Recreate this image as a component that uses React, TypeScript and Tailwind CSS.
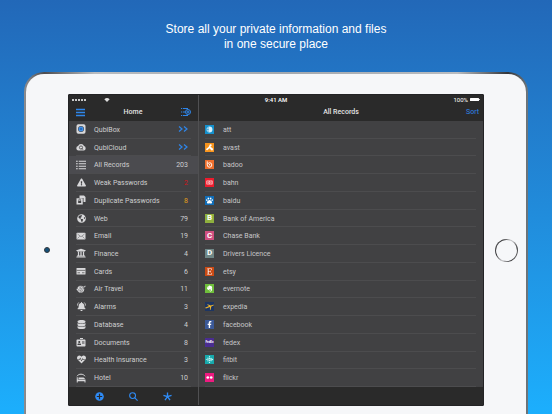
import type { ReactNode } from "react";
import {
  FaAddressCard,
  FaBell,
  FaDatabase,
  FaEtsy,
  FaEvernote,
  FaExclamationTriangle,
  FaFacebookF,
  FaGlobeAmericas,
  FaHeartbeat,
  FaPaw,
  FaUniversity,
} from "react-icons/fa";

type Category = { label: string; count: string; icon: ReactNode; tone?: string; active?: boolean };
type Entry = { label: string; tile: string; mark: ReactNode };

function Glyph({ children, size = "size-[10px]" }: { children: ReactNode; size?: string }) {
  return (
    <svg viewBox="0 0 20 20" className={size} fill="currentColor" aria-hidden="true">
      {children}
    </svg>
  );
}

function Chevrons() {
  return (
    <svg viewBox="0 0 20 12" className="h-[6px] w-[10px]" fill="none" stroke="#2f86ea" strokeWidth="2.400" aria-hidden="true">
      <path d="M2 1l6 5-6 5M12 1l6 5-6 5" />
    </svg>
  );
}

const categories: Category[] = [
  {
    label: "QubiBox",
    count: "",
    icon: (
      <Glyph>
        <rect x="1" y="0.500" width="18" height="19" rx="3.500" />
        <circle cx="10" cy="10" r="6" fill="#414143" />
        <circle cx="10" cy="10" r="5" fill="#3f8fe8" />
        <circle cx="10" cy="10" r="2" fill="#1f5fae" />
      </Glyph>
    ),
  },
  {
    label: "QubiCloud",
    count: "",
    icon: (
      <Glyph>
        <path d="M5 17a4.500 4.500 0 0 1-.8-8.900A6.200 6.200 0 0 1 16 8.200 4.500 4.500 0 0 1 15.500 17z" />
        <circle cx="10" cy="11" r="3.200" fill="none" stroke="#414143" strokeWidth="1.600" />
        <path d="M11 12l3 3.500" stroke="#414143" strokeWidth="1.600" />
      </Glyph>
    ),
  },
  {
    label: "All Records",
    count: "203",
    active: true,
    icon: (
      <Glyph>
        <path d="M0 1.500h3.500v2.200H0zM5.500 1.500H20v2.200H5.500zM0 6.500h3.500v2.200H0zM5.500 6.500H20v2.200H5.500zM0 11.500h3.500v2.200H0zM5.500 11.500H20v2.200H5.500zM0 16.500h3.500v2.200H0zM5.500 16.500H20v2.200H5.500z" />
      </Glyph>
    ),
  },
  { label: "Weak Passwords", count: "2", tone: "text-[#d0161c]", icon: <FaExclamationTriangle className="size-[9px]" /> },
  {
    label: "Duplicate Passwords",
    count: "8",
    tone: "text-[#e3a01b]",
    icon: (
      <Glyph>
        <path d="M7 1h9l3 3v10h-4V6H7z" />
        <path d="M1 6.500h12.500V19H1z" />
        <rect x="4.300" y="11.500" width="6" height="4.500" fill="#414143" />
        <path d="M5.500 11.500V10a1.800 1.800 0 0 1 3.600 0v1.500" fill="none" stroke="#414143" strokeWidth="1.300" />
      </Glyph>
    ),
  },
  { label: "Web", count: "79", icon: <FaGlobeAmericas className="size-[9px]" /> },
  {
    label: "Email",
    count: "19",
    icon: (
      <Glyph>
        <rect x="1" y="3.500" width="18" height="13.500" rx="1.500" />
        <path d="M3 6l7 5.500L17 6M3 15l4.500-4.500M17 15l-4.500-4.500" fill="none" stroke="#6a6a6c" strokeWidth="1.200" />
      </Glyph>
    ),
  },
  { label: "Finance", count: "4", icon: <FaUniversity className="size-[10px]" /> },
  {
    label: "Cards",
    count: "6",
    icon: (
      <Glyph>
        <rect x="1" y="4" width="18" height="13" rx="1" />
        <path d="M1 8.800h18" stroke="#5a5a5c" strokeWidth="1.600" />
        <path d="M3 13.500h5M12 13.500h5" stroke="#5a5a5c" strokeWidth="1.600" />
      </Glyph>
    ),
  },
  {
    label: "Air Travel",
    count: "11",
    icon: (
      <Glyph>
        <circle cx="9.500" cy="10.500" r="6.800" />
        <path d="M0 10l3-1 2 2 5-3-5-3 2-1.500 7 2.500 3-2c2-1 3.500 0 2 1.500L8 13.500l-5 .5z" stroke="#414143" strokeWidth="0.800" />
        <path d="M11 8.500L9 17l2.500-1L16 7z" stroke="#414143" strokeWidth="0.800" />
      </Glyph>
    ),
  },
  {
    label: "Alarms",
    count: "3",
    icon: (
      <span className="relative flex">
        <FaBell className="size-[9px]" />
        <svg viewBox="0 0 20 20" className="absolute inset-0 size-full" fill="none" stroke="currentColor" strokeWidth="1.800" aria-hidden="true">
          <path d="M4 1C2 2.500 1 5 1 8M16 1c2 1.500 3 4 3 7" />
        </svg>
      </span>
    ),
  },
  {
    label: "Database",
    count: "4",
    icon: <FaDatabase className="size-[9px]" />,
  },
  {
    label: "Documents",
    count: "8",
    icon: (
      <span className="flex flex-col items-center">
        <span className="h-px w-[3px] bg-current" />
        <FaAddressCard className="h-[8px] w-[10px]" />
      </span>
    ),
  },
  { label: "Health Insurance", count: "3", icon: <FaHeartbeat className="size-[9px]" /> },
  {
    label: "Hotel",
    count: "10",
    icon: (
      <Glyph>
        <path d="M2 6.500c3-5.500 13-5.500 16 0" fill="none" stroke="currentColor" strokeWidth="2" />
        <path d="M1.500 8.500h2V13H19v6h-2v-2.500H3.500V19h-2z" />
        <path d="M5 9h8c3 0 4.500 1.200 5 3H5z" />
      </Glyph>
    ),
  },
];

function Letter({ children }: { children: string }) {
  return <span className="text-[8px] leading-none font-bold">{children}</span>;
}

const entries: Entry[] = [
  {
    label: "att",
    tile: "bg-[#1590cc]",
    mark: (
      <Glyph size="size-[9px]">
        <circle cx="10" cy="10" r="6.500" fill="#d9effa" />
        <path d="M4 6.500h5M3.500 10h5M4 13.500h5" stroke="#1590cc" strokeWidth="1.600" />
      </Glyph>
    ),
  },
  {
    label: "avast",
    tile: "bg-[#f7941d]",
    mark: (
      <Glyph size="size-[9px]">
        <path d="M3 13l5-4 3-6 3-.5 1 3-3 3 5 3-.5 3-3 1-3.500-4-5 4.500-2.500-.5z" />
        <circle cx="15.500" cy="14.500" r="2.200" />
      </Glyph>
    ),
  },
  {
    label: "badoo",
    tile: "bg-[#ee6f2d]",
    mark: (
      <Glyph size="size-[9px]">
        <path d="M5 3v8a5 5 0 1 0 5-5c-2 0-3 1-3 2.500M10 9v3" fill="none" stroke="currentColor" strokeWidth="2" />
      </Glyph>
    ),
  },
  {
    label: "bahn",
    tile: "bg-[#ec1c2d]",
    mark: (
      <Glyph size="size-[9px]">
        <rect x="3" y="5.500" width="14" height="9" rx="1" fill="#fbc8cc" />
        <path d="M5.500 7.500v5H7c2.500 0 2.500-5 0-5zM11.800 7.500v5h1.500c1.800 0 1.800-2.500 0-2.500 1.600 0 1.600-2.500 0-2.500z" fill="none" stroke="#ec1c2d" strokeWidth="1.200" />
      </Glyph>
    ),
  },
  { label: "baidu", tile: "bg-[#0f6db8]", mark: <FaPaw className="size-[7px]" /> },
  { label: "Bank of America", tile: "bg-[#8fb03e]", mark: <Letter>B</Letter> },
  { label: "Chase Bank", tile: "bg-[#cf4f80]", mark: <Letter>C</Letter> },
  { label: "Drivers Licence", tile: "bg-[#6f8787]", mark: <Letter>D</Letter> },
  { label: "etsy", tile: "bg-[#cb4a14]", mark: <FaEtsy className="size-[7px]" /> },
  { label: "evernote", tile: "bg-[#6fbe3b]", mark: <FaEvernote className="size-[7px]" /> },
  {
    label: "expedia",
    tile: "bg-[#1d3562]",
    mark: (
      <Glyph size="size-[9px]">
        <path d="M0 13l9-4-4-3 1-1 7 2.500L18 6c2-.5 2.500 1 .5 2l-4.500 2-1.500 7-1.500.5L11 11l-9 3.500z" fill="#efb52b" />
      </Glyph>
    ),
  },
  { label: "facebook", tile: "bg-[#3b5998]", mark: <FaFacebookF className="size-[7px]" /> },
  { label: "fedex", tile: "bg-[#4a2d91]", mark: <span className="text-[3px] leading-none font-bold">FedEx</span> },
  {
    label: "fitbit",
    tile: "bg-[#17a9ac]",
    mark: (
      <Glyph size="size-[9px]">
        <g fill="#c9f4f3">
          <circle cx="10" cy="3.500" r="1.500" />
          <circle cx="10" cy="7.500" r="1.800" />
          <circle cx="10" cy="12" r="1.800" />
          <circle cx="10" cy="16.500" r="1.500" />
          <circle cx="6.500" cy="7" r="1.400" />
          <circle cx="6.500" cy="10" r="1.500" />
          <circle cx="6.500" cy="13" r="1.400" />
          <circle cx="3" cy="10" r="1.200" />
          <circle cx="13.500" cy="7.500" r="1.500" />
          <circle cx="13.500" cy="10" r="1.700" />
          <circle cx="13.500" cy="12.500" r="1.500" />
          <circle cx="16.500" cy="10" r="1.700" />
        </g>
      </Glyph>
    ),
  },
  {
    label: "flickr",
    tile: "bg-[#ee1a80]",
    mark: (
      <Glyph size="size-[9px]">
        <circle cx="6.200" cy="10" r="3" />
        <circle cx="13.800" cy="10" r="3" />
      </Glyph>
    ),
  },
];

function StatusBar() {
  return (
    <div className="z-10 col-span-full row-start-1 grid h-[9px] grid-cols-3 items-center self-start px-[3px] text-[6px] leading-none text-white">
      <div className="flex items-center gap-[18px]">
        <svg viewBox="0 0 28 4" className="h-[2px] w-[14px]" fill="#ffffff" role="img" aria-label="Signal strength">
          <circle cx="2" cy="2" r="2" />
          <circle cx="8" cy="2" r="2" />
          <circle cx="14" cy="2" r="2" />
          <circle cx="20" cy="2" r="2" />
          <circle cx="26" cy="2" r="2" />
        </svg>
        <svg viewBox="0 0 12 9" className="h-[4px] w-[6px]" fill="#ffffff" role="img" aria-label="Wi-Fi">
          <path d="M0 3a8.500 8.500 0 0 1 12 0L6 9z" opacity="0.850" />
        </svg>
      </div>
      <span className="text-center font-medium">9:41 AM</span>
      <div className="flex items-center justify-end gap-[2px]">
        <span>100%</span>
        <svg viewBox="0 0 20 6" className="h-[3px] w-[10px]" fill="#ffffff" role="img" aria-label="Battery full">
          <rect width="18" height="6" rx="1" />
          <rect x="18.500" y="2" width="1.500" height="2" />
        </svg>
      </div>
    </div>
  );
}

function Sidebar() {
  return (
    <nav aria-label="Home" className="col-start-1 row-start-1 border-r border-[#505052] pt-2">
      <header className="flex h-[18px] items-center justify-between px-[7px]">
        <button type="button" aria-label="Menu" className="text-[#2f86ea]">
          <svg viewBox="0 0 18 18" className="size-[9px]" stroke="currentColor" strokeWidth="3" aria-hidden="true">
            <path d="M0 3h18M0 9h18M0 15h18" />
          </svg>
        </button>
        <h2 className="font-medium text-[#e4e4e4]">Home</h2>
        <button type="button" aria-label="Add category" className="text-[#2f86ea]">
          <svg viewBox="0 0 20 20" className="size-[10px]" fill="none" stroke="currentColor" strokeWidth="2" aria-hidden="true">
            <path d="M0 3h2.500M4 3h10M0 10h2.500M4 10h4M0 17h2.500M4 17h10" />
            <circle cx="14" cy="10" r="5" />
            <path d="M14 7v6M11 10h6" />
          </svg>
        </button>
      </header>
      <ul className="grid h-[266px] auto-rows-fr bg-[#414143]">
        {categories.map((item) => (
          <li key={item.label} className={item.active ? "bg-[#4b4b4f]" : ""}>
            <button type="button" className="flex h-full w-full px-[7px] text-left text-[#cececf]">
              <span className="flex h-full w-full items-center border-b border-[#4c4c4e] pr-[3px]">
                <span className="flex w-[10px] justify-center text-[#d8d8da]">{item.icon}</span>
                <span className="flex-1 pt-[2px] pl-2">{item.label}</span>
                {item.count ? <span className={`pt-[2px] ${item.tone ?? ""}`}>{item.count}</span> : <Chevrons />}
              </span>
            </button>
          </li>
        ))}
      </ul>
      <footer className="flex h-[18px] items-center justify-center gap-[25px] text-[#2f8bf5]">
        <button type="button" aria-label="Add">
          <Glyph size="size-[9px]">
            <circle cx="10" cy="10" r="9.500" />
            <path d="M10 4v12M4 10h12" stroke="#2a2a2a" strokeWidth="2.600" />
          </Glyph>
        </button>
        <button type="button" aria-label="Search">
          <svg viewBox="0 0 20 20" className="size-[9px]" fill="none" stroke="currentColor" strokeWidth="2.400" aria-hidden="true">
            <circle cx="8" cy="8" r="6.500" />
            <path d="M12.500 12.500l6.500 6.500" />
          </svg>
        </button>
        <button type="button" aria-label="Favorites">
          <svg viewBox="0 0 20 20" className="size-[9px]" stroke="currentColor" strokeWidth="3" aria-hidden="true">
            <path d="M10 10.500V1M10 10.500L1 7.600M10 10.500l9-2.900M10 10.500L4.400 18.200M10 10.500l5.600 7.700" />
          </svg>
        </button>
      </footer>
    </nav>
  );
}

function Records() {
  return (
    <section aria-label="All Records" className="col-start-2 row-start-1 pt-2">
      <header className="grid h-[18px] grid-cols-[1fr_auto_1fr] items-center px-1">
        <h2 className="col-start-2 font-medium text-[#e4e4e4]">All Records</h2>
        <button type="button" className="justify-self-end text-[#2f86ea]">
          Sort
        </button>
      </header>
      <ul className="grid h-[266px] auto-rows-fr bg-[#414143]">
        {entries.map((entry) => (
          <li key={entry.label} className="pr-[7px] pl-[6px]">
            <button type="button" className="flex h-full w-full items-center gap-[9px] border-b border-[#4c4c4e] text-left text-[#c6c6c8]">
              <span className={`flex size-[9px] items-center justify-center overflow-hidden text-white ${entry.tile}`}>{entry.mark}</span>
              <span className="pt-[2px]">{entry.label}</span>
            </button>
          </li>
        ))}
      </ul>
    </section>
  );
}

export default function App() {
  return (
    <main className="flex min-h-screen flex-col bg-linear-to-b from-[#2268b8] to-[#1caffd] px-6 pt-[22px] font-[Roboto,'Liberation_Sans',sans-serif]">
      <h1 className="text-center font-['Liberation_Sans',sans-serif] text-[12px] leading-[15px] text-white">
        Store all your private information and files
        <br />
        in one secure place
      </h1>
      <div className="mt-5 flex-1 rounded-t-[20px] bg-[linear-gradient(90deg,#8d8d90,#4c4c50_4%,#b9bcc0_14%,#a3a8ae_50%,#b9bcc0_86%,#33353a_96%,#6e777d)] px-[2px] pt-[2px]">
        <div className="flex h-full items-start rounded-t-[18px] bg-[#f6f7f9] pt-5 pb-2">
          <div className="flex w-[42px] shrink-0 justify-center self-center">
            <span className="size-[6px] rounded-full border border-[#33383d] bg-[#14507a]" />
          </div>
          <div className="grid min-w-0 flex-1 grid-cols-[130px_1fr] rounded-[1px] border border-[#232325] bg-[#2a2a2a] text-[7px] leading-[9px]">
            <StatusBar />
            <Sidebar />
            <Records />
          </div>
          <div className="flex w-[42px] shrink-0 justify-center self-center pl-[2px]">
            <button
              type="button"
              aria-label="Home button"
              className="size-[23px] rounded-full bg-[linear-gradient(115deg,#6a6a6c,#2e2e30_25%,#c2c2c4_48%,#c2c2c4_55%,#3a3a3c_78%,#9a9a9c)] p-[1px]"
            >
              <span className="block size-full rounded-full bg-[#f6f7f9]" />
            </button>
          </div>
        </div>
      </div>
    </main>
  );
}
